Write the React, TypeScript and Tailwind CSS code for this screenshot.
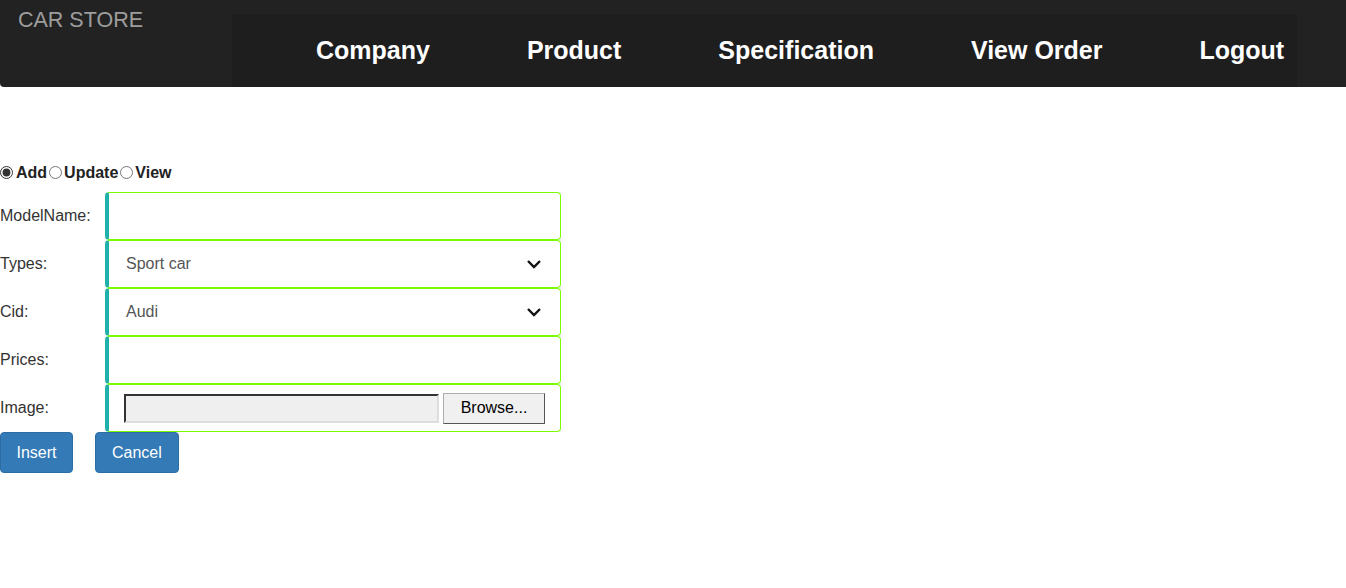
// Car store admin: top nav + product insert form.

const NAV = ['Company', 'Product', 'Specification', 'View Order', 'Logout'];

const field =
  'h-12 w-[456px] rounded-[4px] border border-[#7cfc00] border-l-4 border-l-[#20b2aa] bg-white flex items-center';

function Chevron() {
  return (
    <svg width="16" height="10" viewBox="0 0 16 10" className="mr-[18px]">
      <polyline points="2,2 8,8 14,2" fill="none" stroke="#111" strokeWidth="2.4" />
    </svg>
  );
}

export default function App() {
  const font = { fontFamily: '"Liberation Sans", Arial, sans-serif' };
  return (
    <div className="min-h-[588px] bg-white text-[#333]" style={font}>
      <nav className="h-[87px] bg-[#222] rounded-bl-[4px] flex">
        <div className="w-[232px] shrink-0 pl-[18px] pt-[6px] text-[21.5px] leading-[28px] text-[#9d9d9d]">CAR STORE</div>
        <ul className="mt-[14px] w-[1065px] bg-[#1e1e1e] flex items-center gap-[97px] pl-[84px]">
          {NAV.map((n) => (
            <li key={n} className="text-[25px] font-bold text-white leading-none">{n}</li>
          ))}
        </ul>
      </nav>

      <div className="mt-[77px] flex items-center h-[17px] text-[16px] font-bold text-[#222]">
        <input type="radio" name="m" defaultChecked className="m-0 w-[13px] h-[13px] mr-[3px] accent-[#333]" />
        <span>Add</span>
        <input type="radio" name="m" className="m-0 w-[13px] h-[13px] ml-[2px] mr-[2px]" />
        <span>Update</span>
        <input type="radio" name="m" className="m-0 w-[13px] h-[13px] ml-[2px] mr-[2px]" />
        <span>View</span>
      </div>

      <div className="mt-[11px] flex flex-col text-[16px]">
        <div className="flex items-center">
          <div className="w-[105px]">ModelName:</div>
          <div className={field} />
        </div>
        <div className="flex items-center">
          <div className="w-[105px]">Types:</div>
          <div className={field + ' justify-between'}>
            <span className="pl-[17px] text-[#555]">Sport car</span>
            <Chevron />
          </div>
        </div>
        <div className="flex items-center">
          <div className="w-[105px]">Cid:</div>
          <div className={field + ' justify-between'}>
            <span className="pl-[17px] text-[#555]">Audi</span>
            <Chevron />
          </div>
        </div>
        <div className="flex items-center">
          <div className="w-[105px]">Prices:</div>
          <div className={field} />
        </div>
        <div className="flex items-center">
          <div className="w-[105px]">Image:</div>
          <div className={field}>
            <div className="ml-[15px] w-[315px] h-[29px] bg-[#efefef] border-2 border-t-[#333] border-l-[#333] border-r-[#ddd] border-b-[#ddd]" />
            <div className="ml-[4px] w-[102px] h-[31px] bg-[#f0f0f0] border border-[#adadad] border-r-[#555] border-b-[#555] flex items-center justify-center text-black">
              Browse...
            </div>
          </div>
        </div>
      </div>

      <div className="flex gap-[22px]">
        <button className="h-[41px] px-[15.5px] bg-[#337ab7] border border-[#2e6da4] rounded-[4px] text-white text-[16px]">Insert</button>
        <button className="h-[41px] px-[16px] bg-[#337ab7] border border-[#2e6da4] rounded-[4px] text-white text-[16px]">Cancel</button>
      </div>
    </div>
  );
}
